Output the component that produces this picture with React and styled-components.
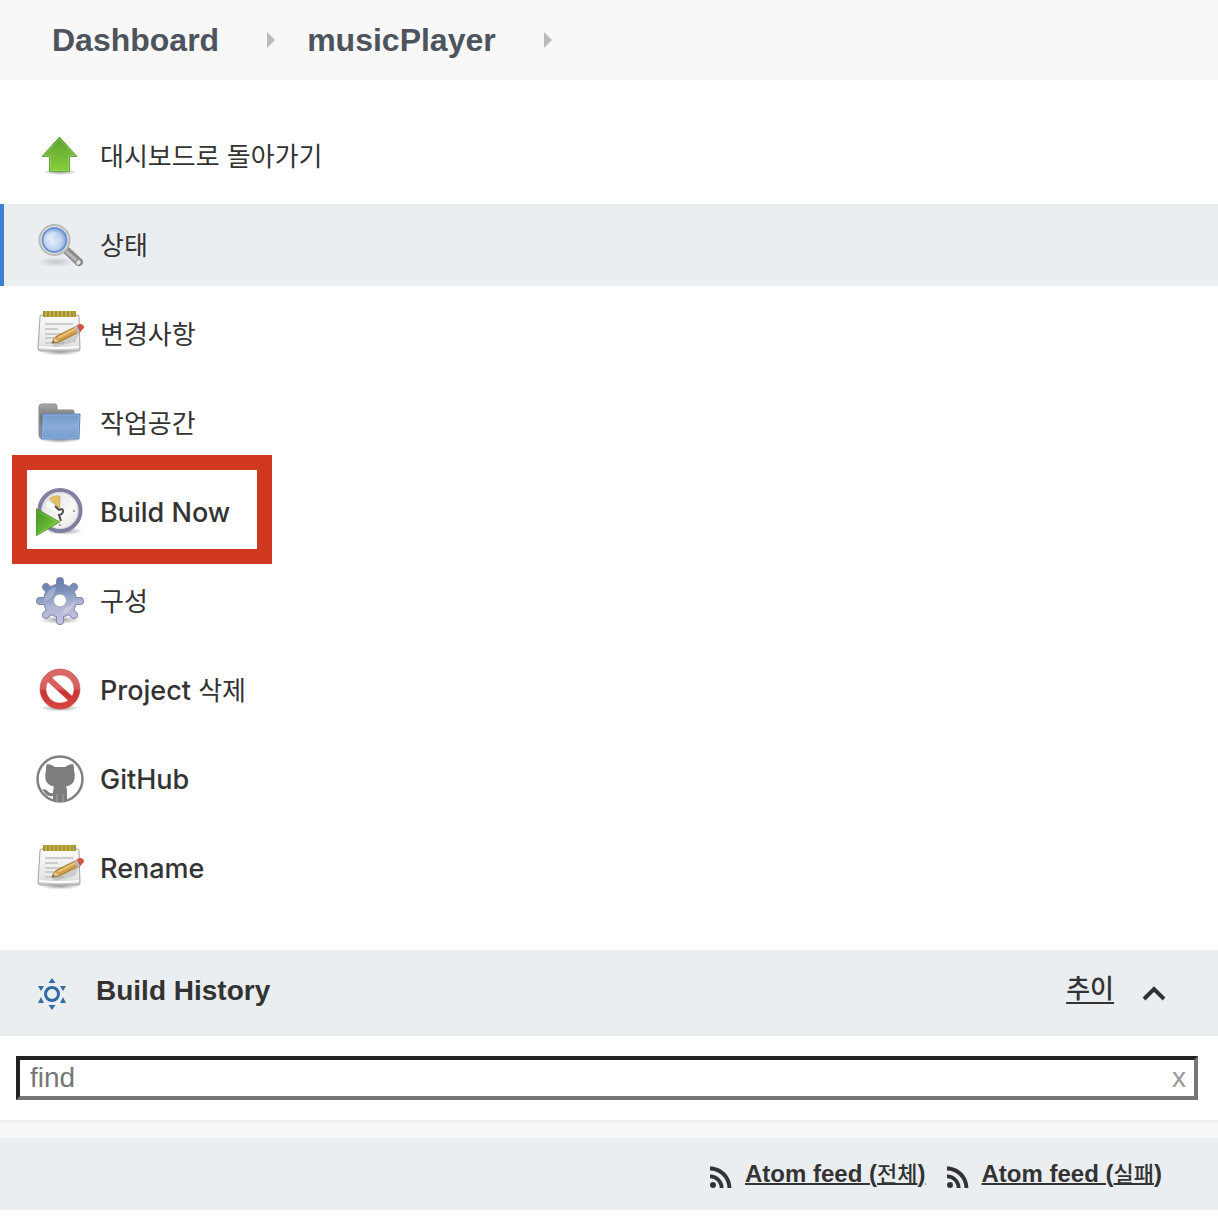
import React, { useState } from 'react';
import styled, { createGlobalStyle } from 'styled-components';

const GlobalStyle = createGlobalStyle`
  body {
    margin: 0;
    background-color: #ffffff;
    color: #333333;
    font-family: "Liberation Sans", "Noto Sans CJK KR", sans-serif;
  }
`;

const Breadcrumbs = styled.nav`
  display: flex;
  align-items: center;
  height: 80px;
  padding: 0 52px;
  background-color: #f8f8f8;
`;

const Crumb = styled.a`
  color: #4d545d;
  font-size: 32px;
  font-weight: bold;
  line-height: 40px;
  text-decoration: none;
`;

const CrumbArrow = styled.span`
  width: 0;
  margin: 0 32px 0 48px;
  border-left: 8px solid #bbbbbb;
  border-top: 8px solid transparent;
  border-bottom: 8px solid transparent;
`;

const TaskList = styled.ul`
  display: flex;
  flex-direction: column;
  gap: 7px;
  margin: 0;
  padding: 35px 0 41px;
  list-style: none;
`;

const TaskItem = styled.li`
  position: relative;
`;

const TaskLink = styled.a`
  display: flex;
  align-items: center;
  gap: 16px;
  height: 82px;
  box-sizing: border-box;
  padding-left: 32px;
  border-left: 4px solid ${({ $active }) => ($active ? '#3c82cf' : 'transparent')};
  background-color: ${({ $active }) => ($active ? '#ebeef1' : 'transparent')};
  color: #333333;
  font-family: Inter, "Liberation Sans", sans-serif;
  font-size: 27px;
  font-weight: 500;
  line-height: 36px;
  text-decoration: none;
`;

const TaskLabel = styled.span`
  padding-top: 2px;
`;

const Korean = styled.span`
  font-family: "Liberation Sans", "Noto Sans CJK KR", sans-serif;
  font-size: ${({ $small }) => ($small ? '22px' : '26px')};
  font-weight: ${({ $medium }) => ($medium ? 500 : 400)};
`;

const Highlight = styled.span`
  position: absolute;
  top: -16px;
  bottom: -11px;
  left: 12px;
  width: 230px;
  border: 15px solid #d13820;
  pointer-events: none;
`;

const TaskSvg = styled.svg`
  flex: none;
  width: 48px;
  height: 48px;
`;

const HistoryHeader = styled.header`
  display: flex;
  align-items: center;
  height: 86px;
  padding: 0 52px 0 36px;
  background-color: #ebeef1;
`;

const HistoryTitle = styled.h2`
  flex: 1;
  margin: 0 0 4px 28px;
  font-size: 28px;
  line-height: 36px;
`;

const TrendLink = styled.a`
  margin-bottom: 4px;
  color: #333333;
  line-height: 36px;
  text-decoration-thickness: 2px;
  text-underline-offset: 4px;
`;

const PlainButton = styled.button`
  display: flex;
  padding: 0;
  border: none;
  background: none;
  color: inherit;
  cursor: pointer;
`;

const CollapseButton = styled(PlainButton)`
  margin-left: 28px;
`;

const SearchBar = styled.div`
  position: relative;
  padding: 20px 20px 20px 16px;
  border-bottom: 2px solid #ebeef1;
`;

const SearchInput = styled.input`
  display: block;
  width: 100%;
  height: 44px;
  box-sizing: border-box;
  padding: 0 40px 0 10px;
  border: 4px solid;
  border-color: #222222 #767676 #767676 #222222;
  border-radius: 0;
  background-color: #ffffff;
  font-family: inherit;
  font-size: 28px;
  outline: none;

  &::placeholder {
    color: #767676;
  }
`;

const ClearButton = styled(PlainButton)`
  position: absolute;
  top: 24px;
  right: 32px;
  color: #999999;
  font-family: inherit;
  font-size: 28px;
  line-height: 36px;
`;

const Spacer = styled.div`
  height: 16px;
  background-color: #f8f8f8;
`;

const Feeds = styled.footer`
  display: flex;
  justify-content: flex-end;
  gap: 21px;
  height: 72px;
  padding-right: 56px;
  align-items: center;
  background-color: #ebeef1;
`;

const FeedLink = styled.a`
  display: flex;
  align-items: center;
  gap: 13px;
  color: #333333;
  font-size: 24px;
  font-weight: bold;
  line-height: 32px;
  text-decoration: none;

  svg {
    margin-top: 6px;
  }
`;

const FeedText = styled.span`
  text-decoration: underline;
  text-decoration-thickness: 2px;
`;

const UpIcon = () => (
  <TaskSvg viewBox="0 0 48 48" aria-hidden="true">
    <defs>
      <linearGradient id="upFill" x1="0" y1="0" x2="0" y2="1">
        <stop offset="0" stopColor="#5d9e34" />
        <stop offset="1" stopColor="#86d136" />
      </linearGradient>
      <radialGradient id="shade">
        <stop offset="0" stopColor="#000000" stopOpacity="0.4" />
        <stop offset="1" stopColor="#000000" stopOpacity="0" />
      </radialGradient>
    </defs>
    <ellipse cx="24" cy="40" rx="18" ry="3" fill="url(#shade)" />
    <path d="M23.500 5 41 24.500h-7.500v15h-20v-15H6z" fill="url(#upFill)" stroke="#65a83b" strokeLinejoin="round" />
    <path d="M23.500 7 39 23.500h-6.500v15h-18v-15H8z" fill="none" stroke="#a4d477" strokeOpacity="0.5" />
  </TaskSvg>
);

const SearchIcon = () => (
  <TaskSvg viewBox="0 0 48 48" aria-hidden="true">
    <defs>
      <radialGradient id="lens" cx="0.42" cy="0.55" r="0.6">
        <stop offset="0" stopColor="#e4eefa" />
        <stop offset="0.65" stopColor="#b9d0ed" />
        <stop offset="1" stopColor="#759cd4" />
      </radialGradient>
    </defs>
    <ellipse cx="20" cy="41" rx="19" ry="5" fill="url(#shade)" opacity="0.4" />
    <path d="m29 28 14 13" stroke="#8d8d8d" strokeWidth="8" strokeLinecap="round" />
    <path d="m31 31 12 10.500" stroke="#b8b8b8" strokeWidth="3" strokeLinecap="round" />
    <ellipse cx="42.500" cy="41.500" rx="2.500" ry="3" fill="#e5e5e5" stroke="#858585" transform="rotate(40 42.500 41.500)" />
    <circle cx="18.500" cy="19" r="15" fill="#e8e8e7" stroke="#b9b9b7" strokeWidth="2" />
    <circle cx="18.500" cy="19" r="12" fill="url(#lens)" stroke="#6f93cb" strokeWidth="2" />
    <path d="M10 20c0-7 4-9 10-9-2 6-5 8-10 9z" fill="#ffffff" opacity="0.3" />
  </TaskSvg>
);

const NotepadIcon = () => (
  <TaskSvg viewBox="0 2 48 48" aria-hidden="true">
    <defs>
      <linearGradient id="paper" x1="0" y1="0" x2="0" y2="1">
        <stop offset="0" stopColor="#fafafa" />
        <stop offset="0.800" stopColor="#e6e6e6" />
        <stop offset="1" stopColor="#c8c8c8" />
      </linearGradient>
    </defs>
    <ellipse cx="24" cy="44" rx="20" ry="3.500" fill="url(#shade)" />
    <path d="M5 7h36q2 0 2 2l1 32q0 2-2 2H5q-3 0-3-3L4 9q0-2 1-2z" fill="url(#paper)" stroke="#a3a3a3" />
    <path d="M3 39q20 2 40 0" fill="none" stroke="#ffffff" strokeWidth="2" />
    <path d="M7 3h33v6H7z" fill="#c0ae47" />
    <path d="M8 3v6M12 3v6M16 3v6M20 3v6M24 3v6M28 3v6M32 3v6M36 3v6M39 3v6" stroke="#827323" strokeWidth="1" />
    <path d="M9 16h28M9 21h13M9 26h22M9 30h9M9 35h19" stroke="#cccccc" strokeWidth="2" />
    <path d="m16 36 28-12-5 10-20 5z" fill="#777777" opacity="0.25" />
    <path d="M16 35q2-6 5-7l20-10 4 5-20 10q-4 2-9 2z" fill="#cf9c48" stroke="#a57628" />
    <path d="m22 30 19-10" stroke="#e9c275" strokeWidth="2" />
    <path d="m16 35 3-5 4 3z" fill="#e3c696" />
    <path d="m16 35 1-2 2 1z" fill="#3f3f3f" />
    <path d="m38 19 3 6 3-1-3-7z" fill="#b7b7b7" />
    <path d="m41 17 3-1q4 0 4 4l-4 4z" fill="#d3503f" />
  </TaskSvg>
);

const FolderIcon = () => (
  <TaskSvg viewBox="0 0 48 48" aria-hidden="true">
    <defs>
      <linearGradient id="folderBack" x1="0" y1="0" x2="0" y2="1">
        <stop offset="0" stopColor="#aaaaaa" />
        <stop offset="0.400" stopColor="#777777" />
        <stop offset="1" stopColor="#9b9b9b" />
      </linearGradient>
      <linearGradient id="folderFront" x1="0" y1="0" x2="0" y2="1">
        <stop offset="0" stopColor="#739acb" />
        <stop offset="0.500" stopColor="#89abd8" />
        <stop offset="1" stopColor="#759ecf" />
      </linearGradient>
    </defs>
    <ellipse cx="24" cy="41" rx="21" ry="3" fill="url(#shade)" />
    <path d="M3 8q0-3 3-3h13q2 0 2 3v3h16q1 0 1 2v26H5q-2 0-2-3z" fill="url(#folderBack)" stroke="#8b8b8b" />
    <path d="M7 15h37l-1 25H5z" fill="url(#folderFront)" stroke="#5a86c0" strokeLinejoin="round" />
    <path d="M8 16h35l-1 23H6z" fill="none" stroke="#a6c1e4" strokeOpacity="0.5" />
  </TaskSvg>
);

const ClockIcon = () => (
  <TaskSvg viewBox="0 0 48 48" aria-hidden="true">
    <defs>
      <linearGradient id="play" x1="0" y1="0" x2="1" y2="1">
        <stop offset="0" stopColor="#3f9128" />
        <stop offset="1" stopColor="#87d53d" />
      </linearGradient>
      <linearGradient id="dial" x1="0" y1="0" x2="1" y2="1">
        <stop offset="0" stopColor="#dcdcda" />
        <stop offset="0.600" stopColor="#f8f8f6" />
        <stop offset="1" stopColor="#e1e1de" />
      </linearGradient>
    </defs>
    <ellipse cx="28" cy="43" rx="19" ry="4" fill="url(#shade)" />
    <circle cx="24" cy="22.500" r="20.500" fill="url(#dial)" stroke="#817f9f" strokeWidth="4" />
    <circle cx="24" cy="22.500" r="18" fill="none" stroke="#d4d2dc" />
    <path d="m24 21-11-10q4-4 11-3z" fill="#e2c066" stroke="#ae9352" strokeOpacity="0.4" />
    <path d="m11 16 12 7" stroke="#ffffff" strokeWidth="5" />
    <path d="m19 18 4 4q4-2 4 1t-4 4l2 6" fill="none" stroke="#4c4c4c" strokeWidth="2" />
    <circle cx="24" cy="24" r="1.500" fill="#ffffff" />
    <circle cx="38" cy="23" r="1" fill="#888888" />
    <circle cx="24" cy="37" r="1" fill="#888888" />
    <path d="M0 20.500 24 34 0 48z" fill="url(#play)" stroke="#57942f" strokeOpacity="0.7" />
    <path d="M1 23 21 34 1 46" fill="none" stroke="#a6e071" strokeOpacity="0.4" />
  </TaskSvg>
);

const GEAR_TEETH = 'M24 4v40M4 24h40M10 10l28 28M38 10 10 38';

const GearIcon = () => (
  <TaskSvg viewBox="0 0 48 48" aria-hidden="true">
    <defs>
      <linearGradient id="gear" gradientUnits="userSpaceOnUse" x1="20" y1="0" x2="28" y2="48">
        <stop offset="0" stopColor="#6079aa" />
        <stop offset="0.300" stopColor="#7a90ba" />
        <stop offset="0.600" stopColor="#b0b5d5" />
        <stop offset="1" stopColor="#c9c2df" />
      </linearGradient>
    </defs>
    <ellipse cx="24" cy="43" rx="20" ry="4" fill="url(#shade)" />
    <g fill="none" stroke="#858aad" strokeLinecap="round">
      <path d={GEAR_TEETH} strokeWidth="8" />
      <circle cx="24" cy="23.500" r="11.500" strokeWidth="11" />
    </g>
    <g fill="none" stroke="url(#gear)" strokeLinecap="round">
      <path d={GEAR_TEETH} strokeWidth="6" />
      <circle cx="24" cy="23.500" r="11.500" strokeWidth="9" />
    </g>
    <circle cx="24" cy="23.500" r="6.500" fill="#ffffff" stroke="#9da2c2" />
    <path d="M8 24c1-8 6-13 12-14-1 8-4 12-12 14zM29 31c5-1 8-4 10-8-1 7-6 13-13 15z" fill="#ffffff" opacity="0.250" />
  </TaskSvg>
);

const DeleteIcon = () => (
  <TaskSvg viewBox="0 0 48 48" aria-hidden="true">
    <defs>
      <linearGradient id="stop" gradientUnits="userSpaceOnUse" x1="24" y1="3" x2="24" y2="44">
        <stop offset="0" stopColor="#d96c6c" />
        <stop offset="0.480" stopColor="#d75d5d" />
        <stop offset="0.550" stopColor="#c73434" />
        <stop offset="1" stopColor="#dc4640" />
      </linearGradient>
    </defs>
    <ellipse cx="24" cy="42" rx="20" ry="3.500" fill="url(#shade)" />
    <circle cx="24" cy="23" r="17" fill="#ffffff" stroke="url(#stop)" strokeWidth="6" />
    <path d="m12 12 24 22" stroke="url(#stop)" strokeWidth="6" />
    <circle cx="24" cy="23" r="20" fill="none" stroke="#c14343" strokeOpacity="0.550" />
    <circle cx="24" cy="23" r="14" fill="none" stroke="#bf3c3c" strokeOpacity="0.400" />
  </TaskSvg>
);

const GithubIcon = () => (
  <TaskSvg viewBox="0 0 48 48" aria-hidden="true">
    <circle cx="24" cy="24" r="22.500" fill="#ffffff" stroke="#808080" strokeWidth="2.500" />
    <path
      d="M11 9q4 0 8 3h10q4-3 8-3 1.500 3 1 6.500 1.500 3.500.5 8.500-1 6-8.500 7.500 1 2 1 5V46q-7 2-14 0v-5q-5 1-8-3-1-2-3-3.500 4-1 6 2 2 2.500 5 1.500 0-4 1-6.500Q10.500 30 9.500 24q-1-5 .5-8.500-.5-3.500 1-6.500z"
      fill="#7d7d7d"
    />
    <path d="M21 39v8M27 39v8" stroke="#a6a6a6" strokeWidth="1" />
  </TaskSvg>
);

const BuildHistoryIcon = () => (
  <svg width="32" height="34" viewBox="0 -2 32 34" aria-hidden="true">
    <circle cx="16" cy="16" r="6.500" fill="none" stroke="#2f6ba5" strokeWidth="3" />
    <path
      d="m16 0 3.500 5h-7zM16 32l3.500-5h-7zM2 8h6l-3 5zM30 8h-6l3 5zM2 25h6l-3-6zM30 25h-6l3-6z"
      fill="#2f6ba5"
    />
  </svg>
);

const ChevronIcon = () => (
  <svg width="24" height="16" viewBox="0 0 24 16" aria-hidden="true">
    <path d="M2 14 12 4l10 10" fill="none" stroke="currentColor" strokeWidth="4" />
  </svg>
);

const RssIcon = () => (
  <svg width="22" height="22" viewBox="4 4 16 16" fill="currentColor" aria-hidden="true">
    <circle cx="6.180" cy="17.820" r="2.180" />
    <path d="M4 4.440v2.830c7.030 0 12.730 5.700 12.730 12.730h2.830c0-8.590-6.970-15.560-15.560-15.560zm0 5.660v2.830c3.900 0 7.070 3.170 7.070 7.070h2.830c0-5.470-4.430-9.900-9.900-9.900z" />
  </svg>
);

const tasks = [
  { id: 'up', icon: UpIcon, label: <Korean>대시보드로 돌아가기</Korean> },
  { id: 'status', icon: SearchIcon, label: <Korean>상태</Korean>, active: true },
  { id: 'changes', icon: NotepadIcon, label: <Korean>변경사항</Korean> },
  { id: 'workspace', icon: FolderIcon, label: <Korean>작업공간</Korean> },
  { id: 'build', icon: ClockIcon, label: 'Build Now', highlighted: true },
  { id: 'configure', icon: GearIcon, label: <Korean>구성</Korean> },
  { id: 'delete', icon: DeleteIcon, label: <>Project <Korean>삭제</Korean></> },
  { id: 'github', icon: GithubIcon, label: 'GitHub' },
  { id: 'rename', icon: NotepadIcon, label: 'Rename' },
];

const BuildHistory = () => {
  const [open, setOpen] = useState(true);
  const [query, setQuery] = useState('');

  return (
    <section>
      <HistoryHeader>
        <BuildHistoryIcon />
        <HistoryTitle>Build History</HistoryTitle>
        <TrendLink href="#trend"><Korean $medium>추이</Korean></TrendLink>
        <CollapseButton type="button" aria-label="collapse" aria-expanded={open} onClick={() => setOpen(!open)}>
          <ChevronIcon />
        </CollapseButton>
      </HistoryHeader>
      {open && (
        <>
          <SearchBar>
            <SearchInput
              aria-label="find"
              placeholder="find"
              value={query}
              onChange={(e) => setQuery(e.target.value)}
            />
            <ClearButton type="button" aria-label="clear" onClick={() => setQuery('')}>x</ClearButton>
          </SearchBar>
          <Spacer />
          <Feeds>
            <FeedLink href="#rssAll">
              <RssIcon />
              <FeedText>Atom feed (<Korean $small $medium>전체</Korean>)</FeedText>
            </FeedLink>
            <FeedLink href="#rssFailed">
              <RssIcon />
              <FeedText>Atom feed (<Korean $small $medium>실패</Korean>)</FeedText>
            </FeedLink>
          </Feeds>
        </>
      )}
    </section>
  );
};

const App = () => (
  <>
    <GlobalStyle />
    <Breadcrumbs aria-label="breadcrumb">
      <Crumb href="#dashboard">Dashboard</Crumb>
      <CrumbArrow />
      <Crumb href="#musicPlayer">musicPlayer</Crumb>
      <CrumbArrow />
    </Breadcrumbs>
    <main>
      <TaskList>
        {tasks.map(({ id, icon: Icon, label, active, highlighted }) => (
          <TaskItem key={id}>
            <TaskLink href={`#${id}`} $active={active}>
              <Icon />
              <TaskLabel>{label}</TaskLabel>
            </TaskLink>
            {highlighted && <Highlight />}
          </TaskItem>
        ))}
      </TaskList>
      <BuildHistory />
    </main>
  </>
);

export default App;
